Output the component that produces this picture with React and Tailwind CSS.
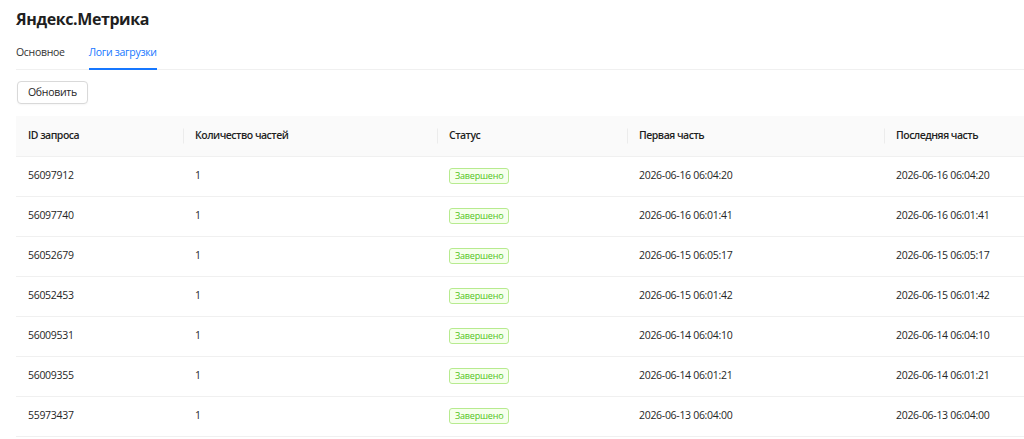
const rows = [
  ['56097912', '2026-06-16 06:04:20'],
  ['56097740', '2026-06-16 06:01:41'],
  ['56052679', '2026-06-15 06:05:17'],
  ['56052453', '2026-06-15 06:01:42'],
  ['56009531', '2026-06-14 06:04:10'],
  ['56009355', '2026-06-14 06:01:21'],
  ['55973437', '2026-06-13 06:04:00'],
]

const headers = ['ID запроса', 'Количество частей', 'Статус', 'Первая часть', 'Последняя часть']

function StatusTag() {
  return (
    <span className="inline-flex h-[16px] items-center rounded-[3px] border border-[#b7eb8f] bg-[#f6ffed] px-[5px] text-[9px] leading-none tracking-[-0.2px] text-[#52c41a]">
      Завершено
    </span>
  )
}

export default function App() {
  return (
    <div
      className="h-[439px] w-[1024px] overflow-hidden bg-white pl-4 pt-[7px] text-[#262626]"
      style={{ fontFamily: '"Open Sans", "Noto Sans", sans-serif' }}
    >
      <h1 className="h-6 text-[16px] font-bold leading-6 tracking-[-0.4px] text-[#1f1f1f]">Яндекс.Метрика</h1>

      <div className="flex h-[39px] items-end gap-[24px] border-b border-[#f0f0f0] text-[10.5px] leading-[14px] tracking-[-0.3px]">
        <div className="pb-[10px] text-[#333]">Основное</div>
        <div className="relative pb-[10px] text-[#1677ff]">
          Логи загрузки
          <div className="absolute bottom-[-1px] left-0 right-0 h-[2px] bg-[#1677ff]" />
        </div>
      </div>

      <button className="mt-[11px] ml-px h-[23px] rounded-[4px] border border-[#d9d9d9] bg-white px-[10px] text-[10.5px] tracking-[-0.3px] text-[#262626] shadow-[0_1px_2px_rgba(0,0,0,0.04)]">
        Обновить
      </button>

      <table className="mt-[12px] w-[1040px] table-fixed border-collapse text-left text-[10.5px] tracking-[-0.3px]">
        <colgroup>
          <col className="w-[167px]" />
          <col className="w-[254px]" />
          <col className="w-[190px]" />
          <col className="w-[257px]" />
          <col />
        </colgroup>
        <thead>
          <tr className="h-[40px] bg-[#fafafa]">
            {headers.map((h, i) => (
              <th key={h} className="relative border-b border-[#f0f0f0] px-3 font-semibold tracking-[-0.5px] text-[#1f1f1f]">
                {i > 0 && <span className="absolute left-0 top-1/2 h-[15px] w-px -translate-y-1/2 bg-[#ececec]" />}
                {h}
              </th>
            ))}
          </tr>
        </thead>
        <tbody>
          {rows.map(([id, date]) => (
            <tr key={id} className="h-[40px]">
              <td className="border-b border-[#f0f0f0] px-3">{id}</td>
              <td className="border-b border-[#f0f0f0] px-3">1</td>
              <td className="border-b border-[#f0f0f0] px-3">
                <StatusTag />
              </td>
              <td className="border-b border-[#f0f0f0] px-3">{date}</td>
              <td className="border-b border-[#f0f0f0] px-3">{date}</td>
            </tr>
          ))}
        </tbody>
      </table>
    </div>
  )
}
